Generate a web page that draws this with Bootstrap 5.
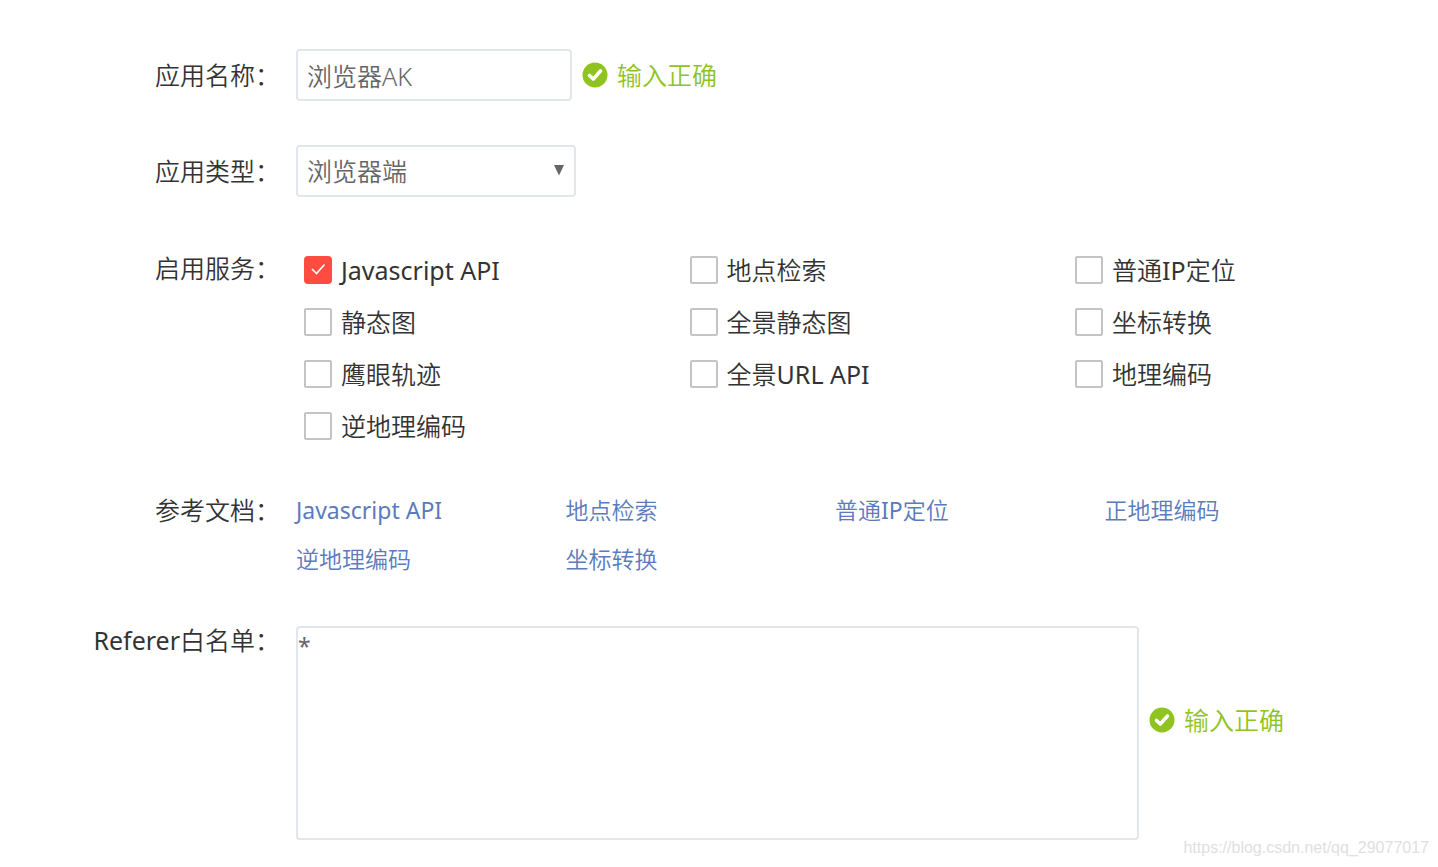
<!DOCTYPE html>
<html lang="zh-CN">
<head>
<meta charset="utf-8">
<meta name="viewport" content="width=device-width, initial-scale=1">
<title>应用设置</title>
<link href="https://cdn.jsdelivr.net/npm/bootstrap@5.3.0/dist/css/bootstrap.min.css" rel="stylesheet">
<style>
  body { font-family: "Noto Sans", "Noto Sans CJK SC", sans-serif; font-size: 25px; font-weight: 350; line-height: 36px; color: #333; background: #fff; }
  .app-form { padding-top: 49px; padding-bottom: 26px; }
  .form-line { margin-bottom: 45px; }
  .name-line { margin-bottom: 44px; }
  .type-line { margin-bottom: 53px; }
  .service-line { margin-bottom: 48px; }
  .latin { font-weight: 400; }
  .field-label { flex: 0 0 280px; text-align: right; }
  .field-box { border: 2px solid #e2e6ec; border-radius: 4px; color: #666; background-color: #fff; font-size: 25px; font-weight: 350; line-height: 36px; padding: 4px 9px; }
  .name-box { width: 276px; height: 52px; }
  .type-box { width: 280px; height: 52px; appearance: none; }
  .select-arrow { right: 12px; top: 20px; width: 10px; height: 11px; pointer-events: none; }
  .list-box { height: 214px; padding: 0; resize: none; font-size: 23px; font-weight: 400; }
  .input-ok { color: #8fc31f; gap: 9px; margin-left: 10px; }
  .list-ok { flex: 0 0 289px; padding-bottom: 26px; }
  .service-grid { display: grid; grid-template-columns: 34% 34% 32%; row-gap: 16px; padding-top: 2px; }
  .service-item { gap: 9px; }
  .service-item input { appearance: none; flex: none; width: 28px; height: 28px; margin: 0; border: 2px solid #c4c4c4; border-radius: 2px; background: #fff; }
  .service-item input:checked { border-color: #ff4c41; border-radius: 4px; background: #ff4c41 url("data:image/svg+xml,%3Csvg xmlns='http://www.w3.org/2000/svg' viewBox='0 0 24 24'%3E%3Cpath d='M6 11 10.500 15.500 18.500 6.500' fill='none' stroke='white' stroke-width='1.6'/%3E%3C/svg%3E") center / 100%; }
  .doc-list { padding-right: 64px; font-size: 23px; row-gap: 13px; }
  .doc-list a { color: #5b7bbd; text-decoration: none; }
  .site-mark { right: 9px; bottom: 6px; font: 16px/24px "Liberation Sans", sans-serif; color: #e0e0e0; }
</style>
</head>
<body>
<svg class="d-none" xmlns="http://www.w3.org/2000/svg">
  <symbol id="ok" viewBox="0 0 26 26"><circle cx="13" cy="13" r="12.500" fill="#8fc31f"/><path d="M7.500 13.500 11.300 17 18.500 9" fill="none" stroke="#fff" stroke-width="3.600" stroke-linecap="round" stroke-linejoin="round"/></symbol>
</svg>
<main class="position-relative">
<form class="app-form">
  <div class="name-line d-flex align-items-center gap-3">
    <label class="field-label" for="app-name">应用名称：</label>
    <div class="d-flex align-items-center">
      <input class="field-box name-box" id="app-name" type="text" value="浏览器AK">
      <span class="input-ok d-flex align-items-center"><svg width="26" height="26"><use href="#ok"/></svg>输入正确</span>
    </div>
  </div>
  <div class="type-line d-flex align-items-center gap-3">
    <label class="field-label" for="app-type">应用类型：</label>
    <div class="position-relative d-flex">
      <select class="field-box type-box" id="app-type"><option>浏览器端</option></select>
      <svg class="select-arrow position-absolute" viewBox="0 0 10 11"><path d="M0 0H10L5 10.500Z" fill="#666"/></svg>
    </div>
  </div>
  <div class="service-line d-flex gap-3">
    <div class="field-label" id="svc">启用服务：</div>
    <div class="service-grid flex-fill ps-2" role="group" aria-labelledby="svc">
      <div class="service-item d-flex align-items-center"><input type="checkbox" id="s1" checked><label class="latin" for="s1">Javascript API</label></div>
      <div class="service-item d-flex align-items-center"><input type="checkbox" id="s2"><label for="s2">地点检索</label></div>
      <div class="service-item d-flex align-items-center"><input type="checkbox" id="s3"><label for="s3">普通<span class="latin">IP</span>定位</label></div>
      <div class="service-item d-flex align-items-center"><input type="checkbox" id="s4"><label for="s4">静态图</label></div>
      <div class="service-item d-flex align-items-center"><input type="checkbox" id="s5"><label for="s5">全景静态图</label></div>
      <div class="service-item d-flex align-items-center"><input type="checkbox" id="s6"><label for="s6">坐标转换</label></div>
      <div class="service-item d-flex align-items-center"><input type="checkbox" id="s7"><label for="s7">鹰眼轨迹</label></div>
      <div class="service-item d-flex align-items-center"><input type="checkbox" id="s8"><label for="s8">全景<span class="latin">URL API</span></label></div>
      <div class="service-item d-flex align-items-center"><input type="checkbox" id="s9"><label for="s9">地理编码</label></div>
      <div class="service-item d-flex align-items-center"><input type="checkbox" id="s10"><label for="s10">逆地理编码</label></div>
    </div>
  </div>
  <div class="form-line d-flex gap-3">
    <div class="field-label">参考文档：</div>
    <div class="doc-list flex-fill row row-cols-4 g-0">
      <div><a class="latin" href="#">Javascript API</a></div>
      <div><a href="#">地点检索</a></div>
      <div><a href="#">普通<span class="latin">IP</span>定位</a></div>
      <div><a href="#">正地理编码</a></div>
      <div><a href="#">逆地理编码</a></div>
      <div><a href="#">坐标转换</a></div>
    </div>
  </div>
  <div class="d-flex gap-3">
    <label class="field-label" for="referer"><span class="latin">Referer</span>白名单：</label>
    <div class="d-flex flex-fill align-items-center pt-1">
      <textarea class="field-box list-box flex-fill" id="referer">*</textarea>
      <span class="input-ok list-ok d-flex align-items-center"><svg width="26" height="26"><use href="#ok"/></svg>输入正确</span>
    </div>
  </div>
</form>
<div class="site-mark position-absolute">https://blog.csdn.net/qq_29077017</div>
</main>
<script src="https://cdn.jsdelivr.net/npm/bootstrap@5.3.0/dist/js/bootstrap.bundle.min.js"></script>
</body>
</html>
